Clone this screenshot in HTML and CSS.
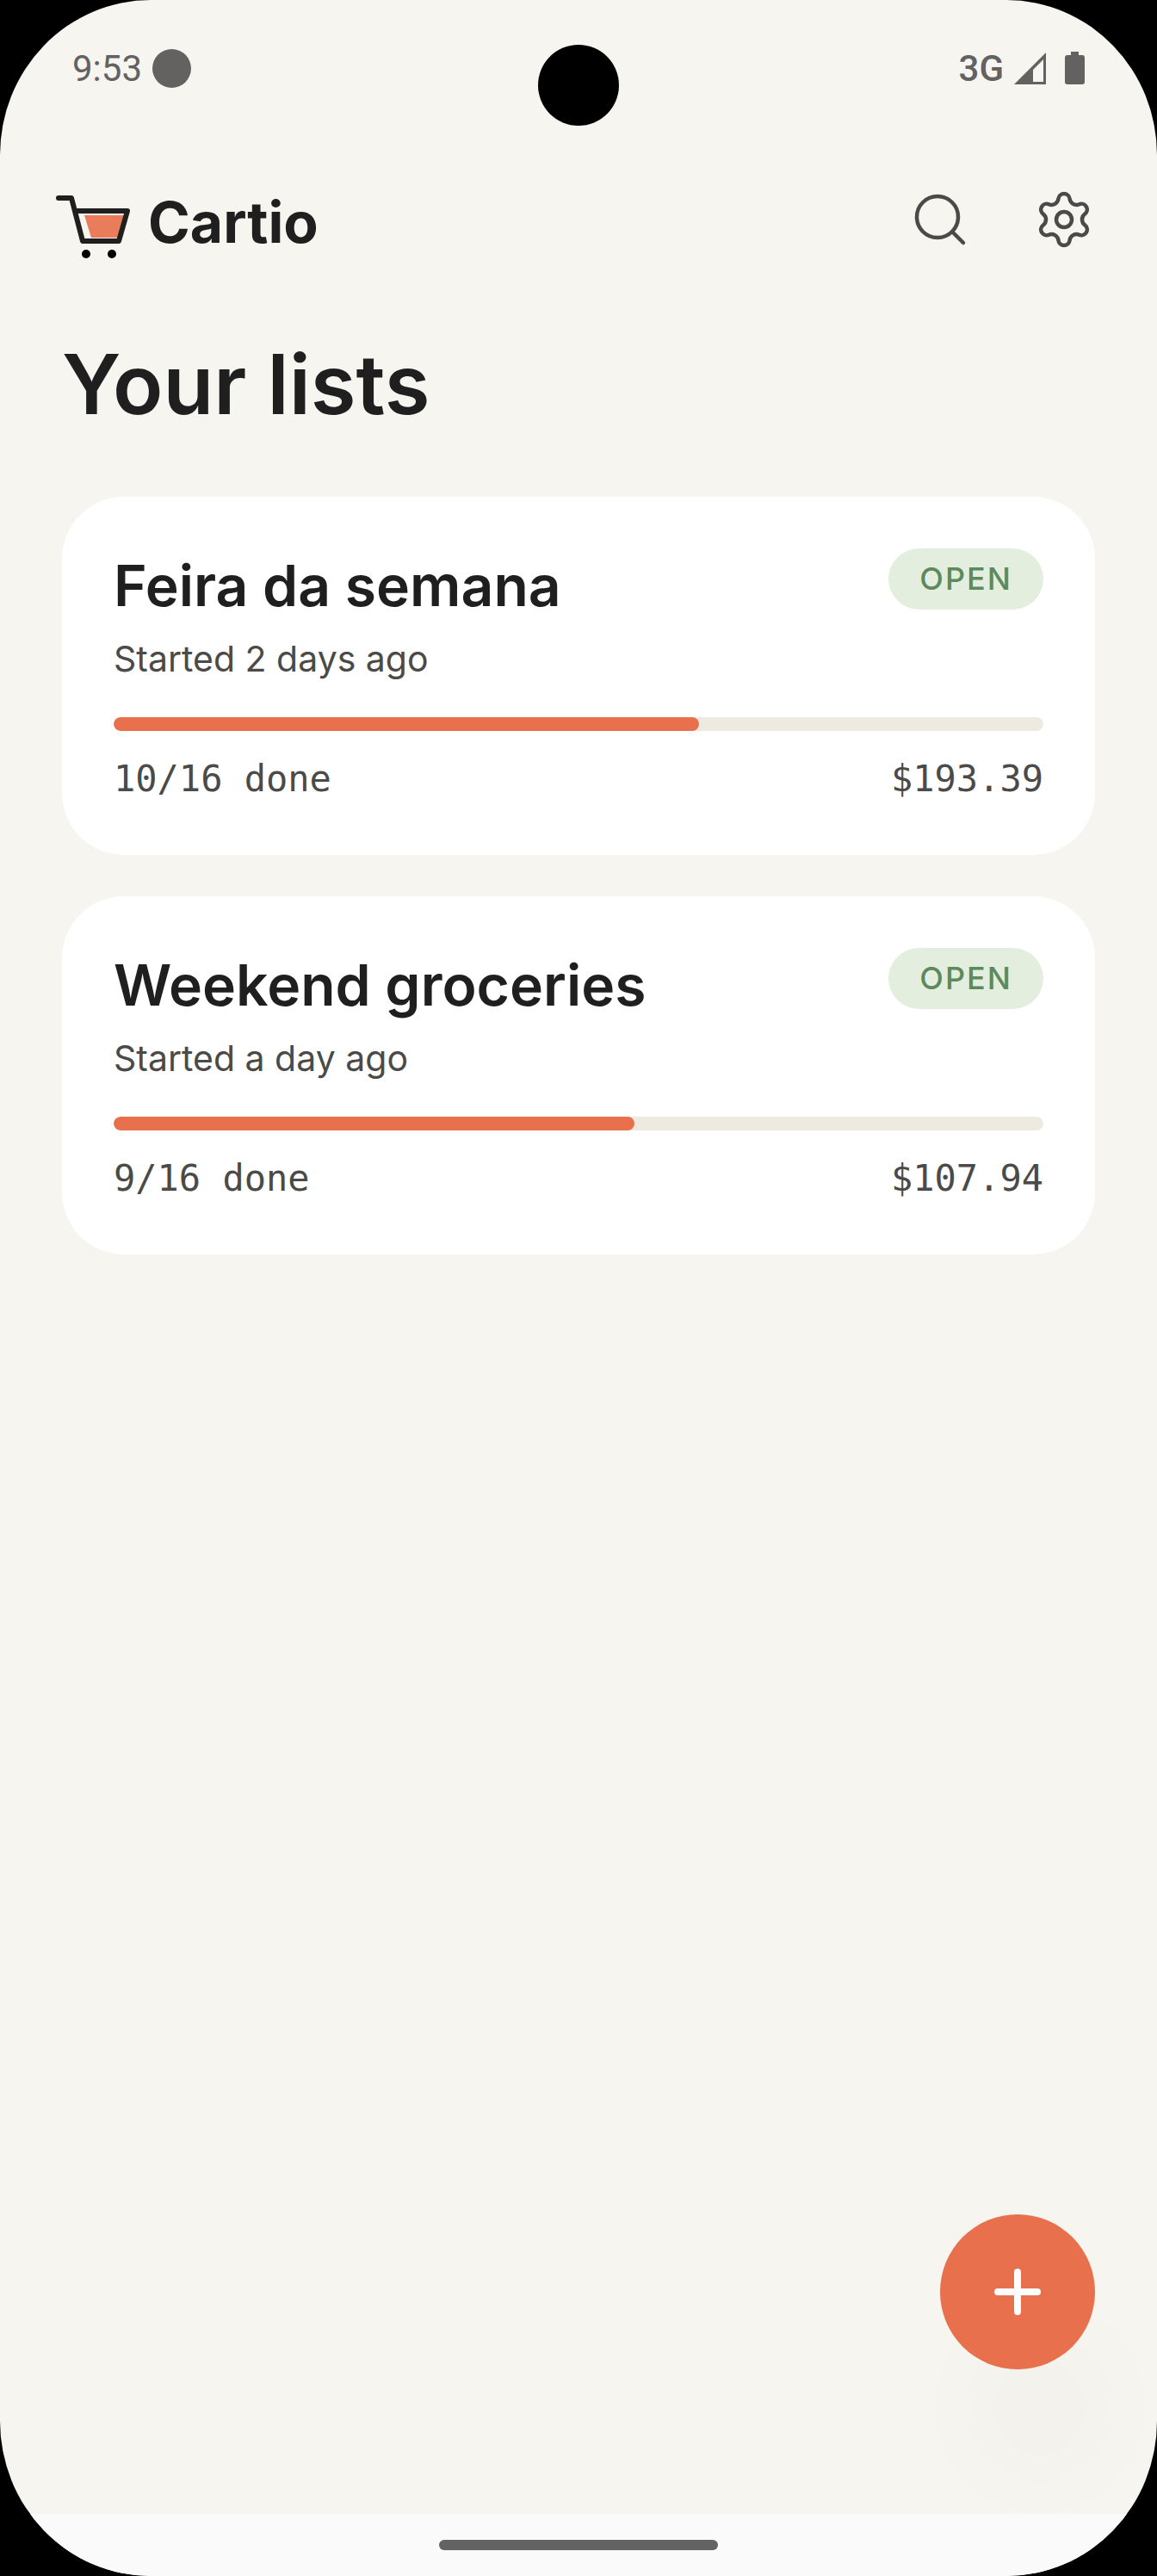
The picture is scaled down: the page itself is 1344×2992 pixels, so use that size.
FILE: index.html
```
<!DOCTYPE html>
<html lang="en">
<head>
  <meta charset="UTF-8">
  <meta name="viewport" content="width=device-width, initial-scale=1">
  <title>Cartio</title>
  <link rel="stylesheet" href="styles.css">
</head>
<body>
  <div class="screen">
    <div class="camera"></div>

    <!-- status bar -->
    <div class="status-bar">
      <div class="status-left">
        <span>9:53</span>
        <span class="status-dot"></span>
      </div>
      <div class="status-right">
        <span class="network">3G</span>
        <svg class="signal" viewBox="0 0 37 37" aria-hidden="true">
          <path fill-rule="evenodd" d="M0 37 37 0V37ZM22 20V34H34V8Z"/>
        </svg>
        <svg class="battery" viewBox="0 0 23 38" aria-hidden="true">
          <path d="M7 0h9v4h4a3 3 0 0 1 3 3v28a3 3 0 0 1-3 3H3a3 3 0 0 1-3-3V7a3 3 0 0 1 3-3h4z"/>
        </svg>
      </div>
    </div>

    <header class="app-bar">
      <div class="brand">
        <svg class="logo" viewBox="0 0 88 75" aria-hidden="true">
          <path class="logo-fill" d="M34 24H81L73 50H42Z"/>
          <path class="logo-line" d="M4 4H19L32 54H74L84 19H23"/>
          <circle cx="36" cy="69" r="5"/>
          <circle cx="66" cy="69" r="5"/>
        </svg>
        <span class="brand-name">Cartio</span>
      </div>
      <div class="actions">
        <button class="icon-button" type="button" aria-label="Search">
          <svg viewBox="0 0 24 24"><circle cx="11" cy="11" r="8"/><path d="m17 17 4 4"/></svg>
        </button>
        <button class="icon-button" type="button" aria-label="Settings">
          <svg viewBox="-12 -12 24 24">
            <circle r="3"/>
            <path d="M-2.18-8.06A2.2 2.2 0 0 1 2.18-8.06A2.67 2.67 0 0 0 5.89-5.92A2.2 2.2 0 0 1 8.07-2.14A2.67 2.67 0 0 0 8.07 2.14A2.2 2.2 0 0 1 5.89 5.92A2.67 2.67 0 0 0 2.18 8.06A2.2 2.2 0 0 1-2.18 8.06A2.67 2.67 0 0 0-5.89 5.92A2.2 2.2 0 0 1-8.07 2.14A2.67 2.67 0 0 0-8.07-2.14A2.2 2.2 0 0 1-5.89-5.92A2.67 2.67 0 0 0-2.18-8.06Z"/>
          </svg>
        </button>
      </div>
    </header>

    <main class="content">
      <h1>Your lists</h1>
      <a class="card" href="#feira">
        <div class="card-top">
          <h2>Feira da semana</h2>
          <span class="badge">OPEN</span>
        </div>
        <p class="started">Started 2 days ago</p>
        <progress class="bar" max="100" value="63" aria-label="Feira da semana progress"></progress>
        <div class="card-bottom">
          <span>10/16 done</span>
          <span>$193.39</span>
        </div>
      </a>
      <a class="card" href="#weekend">
        <div class="card-top">
          <h2>Weekend groceries</h2>
          <span class="badge">OPEN</span>
        </div>
        <p class="started">Started a day ago</p>
        <progress class="bar" max="100" value="56" aria-label="Weekend groceries progress"></progress>
        <div class="card-bottom">
          <span>9/16 done</span>
          <span>$107.94</span>
        </div>
      </a>
    </main>

    <button class="fab" type="button" aria-label="New list">
      <svg viewBox="0 0 54 54"><path d="M27 4V50M4 27H50"/></svg>
    </button>

    <!-- gesture bar -->
    <div class="nav-bar"><span class="nav-handle"></span></div>
  </div>
</body>
</html>
```

FILE: styles.css
```
* {
  box-sizing: border-box;
}
body {
  margin: 0;
  background: #000;
  color: #1f1f1f;
  font-family: Inter, "Liberation Sans", sans-serif;
}
h1, h2, p {
  margin: 0;
}
button {
  border: 0;
  padding: 0;
  background: none;
  cursor: pointer;
}
svg {
  display: block;
}

.screen {
  position: relative;
  display: flex;
  flex-direction: column;
  min-height: 100vh;
  overflow: hidden;
  border-radius: 175px / 180px;
  background: #f6f5f0;
}
.camera {
  position: absolute;
  top: 52px;
  left: 50%;
  width: 94px;
  height: 94px;
  margin-left: -47px;
  border-radius: 50%;
  background: #000;
}

/* status bar */
.status-bar {
  display: flex;
  justify-content: space-between;
  align-items: center;
  height: 158px;
  padding: 0 84px;
  color: #636260;
  font-family: Roboto, sans-serif;
  font-size: 42px;
}
.status-left, .status-right {
  display: flex;
  align-items: center;
}
.status-left {
  gap: 12px;
}
.status-dot {
  width: 45px;
  height: 45px;
  border-radius: 50%;
  background: #636260;
}
.network {
  font-weight: 500;
}
.signal {
  width: 37px;
  height: 37px;
  margin: 0 22px 0 12px;
  fill: #636260;
}
.battery {
  width: 23px;
  height: 38px;
  fill: #636260;
}

/* header */
.app-bar {
  display: flex;
  justify-content: space-between;
  align-items: center;
  height: 200px;
  padding: 0 72px 0 64px;
}
.brand {
  display: flex;
  align-items: center;
  gap: 20px;
}
.logo {
  width: 88px;
  height: 75px;
  margin-top: 10px;
}
.logo-fill {
  fill: #e97c5a;
}
.logo-line {
  fill: none;
  stroke: #1f1f1f;
  stroke-width: 6;
  stroke-linecap: round;
  stroke-linejoin: round;
}
.brand-name {
  font-size: 66px;
  font-weight: 700;
}
.actions {
  display: flex;
  gap: 72px;
  padding-bottom: 6px;
}
.icon-button svg {
  width: 72px;
  height: 72px;
  fill: none;
  stroke: #4a4a48;
  stroke-width: 1.5;
  stroke-linecap: round;
}

/* lists */
.content {
  display: flex;
  flex-direction: column;
  flex: 1;
  gap: 48px;
  padding: 24px 72px;
}
h1 {
  margin-bottom: 19px;
  font-size: 96px;
  line-height: 128px;
  font-weight: 600;
}
.card {
  padding: 60px;
  border-radius: 72px;
  background: #fff;
  color: #4a4a48;
  text-decoration: none;
}
.card-top, .card-bottom {
  display: flex;
  justify-content: space-between;
}
.card-top {
  align-items: flex-start;
}
h2 {
  color: #1f1f1f;
  font-size: 66px;
  line-height: 86px;
  font-weight: 600;
}
.badge {
  padding: 0 36px;
  border-radius: 36px;
  background: #e4eedf;
  color: #5c8a5c;
  font-size: 36px;
  line-height: 71px;
  font-weight: 500;
  letter-spacing: 2px;
}
.started {
  margin-top: 14px;
  font-size: 41px;
  line-height: 56px;
}
.bar {
  display: block;
  width: 100%;
  height: 16px;
  margin: 40px 0 28px;
  border: 0;
  border-radius: 8px;
  overflow: hidden;
  background: #efeadf;
  appearance: none;
}
.bar::-webkit-progress-bar {
  background: #efeadf;
}
.bar::-webkit-progress-value {
  border-radius: 8px;
  background: #e8704d;
}
.card-bottom {
  font-family: "DejaVu Sans Mono", monospace;
  font-size: 42px;
  line-height: 56px;
}

.fab {
  position: absolute;
  right: 72px;
  bottom: 240px;
  display: flex;
  align-items: center;
  justify-content: center;
  width: 180px;
  height: 180px;
  border-radius: 50%;
  background: #e8704d;
  box-shadow: 26px 134px 110px 0 rgba(60, 60, 60, 0.02);
}
.fab svg {
  width: 54px;
  height: 54px;
  stroke: #fff;
  stroke-width: 8;
  stroke-linecap: round;
}
.nav-bar {
  display: flex;
  justify-content: center;
  align-items: center;
  height: 72px;
  background: #fafafa;
}
.nav-handle {
  width: 324px;
  height: 12px;
  border-radius: 6px;
  background: #636363;
}
```
